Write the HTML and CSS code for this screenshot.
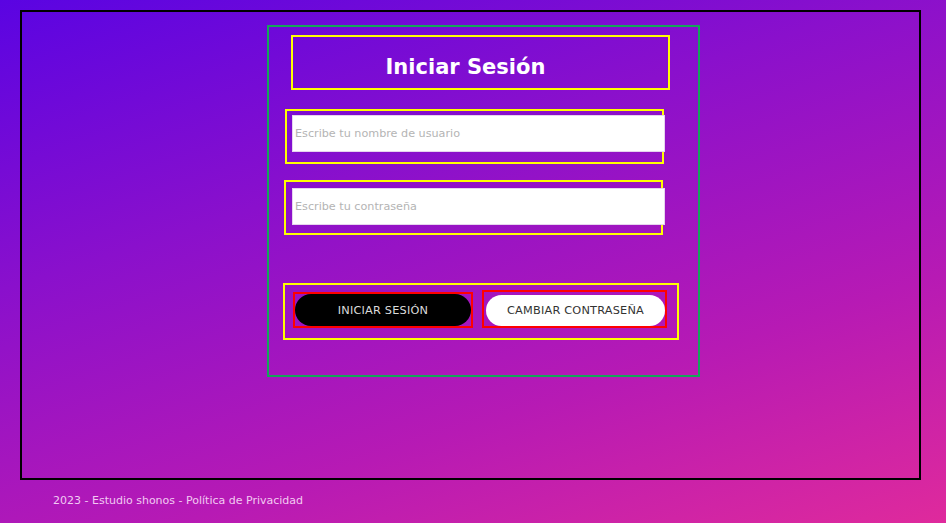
FILE: index.html
```html
<!DOCTYPE html>
<html lang="es">
<head>
<meta charset="utf-8">
<title>Iniciar Sesión</title>
<link rel="stylesheet" href="styles.css">
</head>
<body>
  <main class="frame">
    <section class="login">
      <div class="title-box">
        <h1 class="title">Iniciar Sesión</h1>
      </div>
      <div class="field field-user">
        <input class="input" type="text" placeholder="Escribe tu nombre de usuario">
      </div>
      <div class="field field-pass">
        <input class="input" type="password" placeholder="Escribe tu contraseña">
      </div>
      <div class="actions">
        <div class="btn-wrap btn-wrap-login">
          <button class="btn btn-dark">INICIAR SESIÓN</button>
        </div>
        <div class="btn-wrap btn-wrap-change">
          <button class="btn btn-light">CAMBIAR CONTRASEÑA</button>
        </div>
      </div>
    </section>
  </main>
  <footer class="footer">2023 - Estudio shonos - Política de Privacidad</footer>
</body>
</html>
```

FILE: styles.css
```css
* {
  box-sizing: border-box;
}

html, body {
  margin: 0;
  padding: 0;
}

body {
  width: 946px;
  height: 523px;
  overflow: hidden;
  padding-top: 10px;
  font-family: "DejaVu Sans", "Noto Sans", sans-serif;
  background: linear-gradient(162deg, #5a04e2 0%, #8a10cc 35%, #b71ab4 70%, #df2a9c 100%);
}

.frame {
  display: block;
  margin-left: 20px;
  width: 901px;
  height: 470px;
  border: 2px solid #000;
  padding: 13px 0 0 245px;
}

.login {
  width: 433px;
  height: 352px;
  border: 2px solid #14a65a;
  display: flex;
  flex-direction: column;
  align-items: flex-start;
}

.title-box {
  margin: 8px 0 0 22px;
  width: 379px;
  height: 55px;
  border: 2px solid #ffff00;
  display: flex;
  align-items: center;
  justify-content: center;
}

.title {
  margin: 10px 0 0 -30px;
  color: #fff;
  font-size: 21px;
  font-weight: 700;
  line-height: 1;
}

.field {
  width: 379px;
  height: 55px;
  border: 2px solid #ffff00;
}

.field-user {
  margin: 19px 0 0 16px;
  padding: 4px 0 0 5px;
}

.field-pass {
  margin: 16px 0 0 15px;
  padding: 6px 0 0 6px;
}

.input {
  display: block;
  width: 373px;
  height: 37px;
  margin: 0;
  border: 1px solid #e6d4ee;
  background: #fff;
  padding: 0 2px;
  font-family: "DejaVu Sans", "Noto Sans", sans-serif;
  font-size: 11.2px;
  color: #333;
  outline: none;
}

.input::placeholder {
  color: #b4b4b4;
}

.actions {
  margin: 48px 0 0 14px;
  width: 396px;
  height: 57px;
  border: 2px solid #ffff00;
  display: flex;
  align-items: flex-start;
}

.btn-wrap {
  border: 2px solid #ff0000;
  display: flex;
}

.btn-wrap-login {
  margin: 7px 0 0 8px;
  width: 180px;
  height: 36px;
}

.btn-wrap-change {
  margin: 5px 0 0 9px;
  width: 185px;
  height: 38px;
  padding: 3px 0 0 2px;
}

.btn {
  margin: 0;
  border: none;
  font-family: "DejaVu Sans", "Noto Sans", sans-serif;
  font-size: 11.3px;
  letter-spacing: 0.2px;
  padding: 0;
  cursor: pointer;
}

.btn-dark {
  width: 176px;
  height: 32px;
  border-radius: 16px;
  background: #000;
  color: #dcdcdc;
}

.btn-light {
  width: 179px;
  height: 31px;
  border-radius: 16px;
  background: #fff;
  color: #333;
}

.footer {
  margin: 13px 0 0 53px;
  color: rgba(255, 235, 255, 0.85);
  font-size: 11px;
  line-height: 15px;
}
```
